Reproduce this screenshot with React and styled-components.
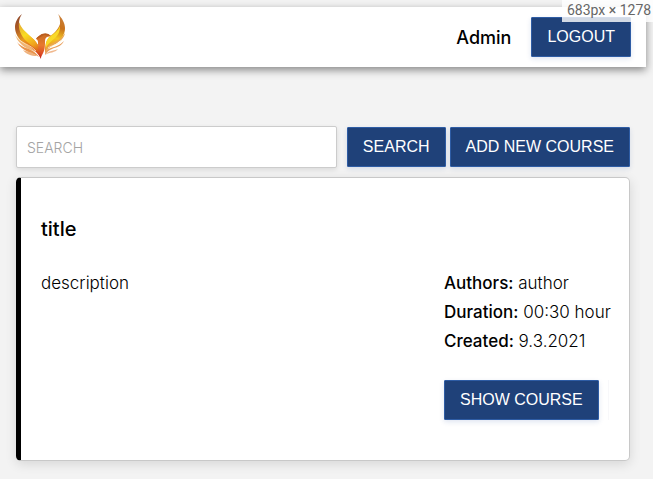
import React from "react";
import styled, { createGlobalStyle } from "styled-components";

const GlobalStyle = createGlobalStyle`
  * { box-sizing: border-box; }
  body {
    margin: 0;
    background: #f3f3f3;
    color: #000;
    font-family: Inter, "Open Sans", sans-serif;
    font-size: 17px;
    font-weight: 300;
  }
`;

const Page = styled.div`
  position: relative;
  overflow: hidden;
  padding: 7px 7px 18px 0;
`;

const Header = styled.header`
  display: flex;
  align-items: center;
  justify-content: space-between;
  height: 60px;
  padding: 0 15px 0 14px;
  background: #fff;
  box-shadow: 0 3px 8px rgba(0, 0, 0, 0.45);
`;

const LogoSvg = styled.svg`
  display: block;
  width: 52px;
  height: 48px;
`;

const UserArea = styled.div`
  display: flex;
  align-items: center;
  gap: 20px;
`;

const UserName = styled.span`
  font-size: 18px;
  font-weight: 500;
`;

const Button = styled.button`
  height: 40px;
  padding: 0 15px;
  border: 1px solid #2e5ca4;
  border-radius: 1px;
  background: #1f4179;
  color: #fff;
  font-family: "Liberation Sans", Arial, sans-serif;
  font-size: 16px;
  white-space: nowrap;
  text-transform: uppercase;
  box-shadow: 0 2px 5px rgba(40, 80, 160, 0.15);
  cursor: pointer;
`;

const SizeBadge = styled.div`
  position: absolute;
  top: 0;
  right: 0;
  width: 91px;
  height: 22px;
  padding-left: 5px;
  overflow: hidden;
  background: rgba(255, 255, 255, 0.8);
  color: #666;
  font-family: Roboto, sans-serif;
  font-size: 14px;
  font-weight: 400;
  line-height: 21px;
  white-space: nowrap;
`;

const Main = styled.main`
  display: flex;
  flex-direction: column;
  gap: 9px;
  padding: 59px 16px 0;
`;

const SearchBar = styled.form`
  display: flex;
  align-items: center;
  gap: 4px;
`;

const SearchInput = styled.input`
  flex: 1;
  min-width: 0;
  height: 42px;
  margin-right: 6px;
  padding: 0 10px;
  border: 1px solid #ccc;
  border-radius: 2px;
  background: #fff;
  font-family: inherit;
  font-size: 14px;
  font-weight: 300;
  box-shadow: 0 2px 5px rgba(0, 0, 0, 0.1);
  &::placeholder { color: #a4a4a4; opacity: 1; }
`;

const Card = styled.article`
  padding: 38px 20px 40px;
  border: 1px solid #c8c8c8;
  border-left: 5px solid #000;
  border-radius: 5px;
  background: #fff;
  box-shadow: 0 3px 12px rgba(0, 0, 0, 0.12);
`;

const Title = styled.h2`
  margin: 0 0 27px;
  font-size: 20px;
  font-weight: 500;
  line-height: 26px;
`;

const CardBody = styled.div`
  display: flex;
  justify-content: space-between;
  gap: 20px;
`;

const Description = styled.p`
  margin: 0;
  line-height: 29px;
`;

const Details = styled.div`
  flex: 0 0 165px;
  min-width: 0;
`;

const Detail = styled.p`
  margin: 0;
  line-height: 29px;
  white-space: nowrap;
  b { font-weight: 500; }
`;

const Actions = styled.div`
  display: flex;
  justify-content: space-between;
  margin-top: 24px;
  border-right: 1px solid #f8f8fa;
`;

function Logo() {
  return (
    <LogoSvg viewBox="0 0 52 48" role="img" aria-label="Phoenix">
      <defs>
        <linearGradient id="leftWing" gradientUnits="userSpaceOnUse" x1="3" y1="2" x2="27" y2="45">
          <stop offset="0" stopColor="#8f4a2c" />
          <stop offset=".25" stopColor="#ad5a24" />
          <stop offset=".5" stopColor="#e89a22" />
          <stop offset=".8" stopColor="#df5b1c" />
          <stop offset="1" stopColor="#c4211a" />
        </linearGradient>
        <linearGradient id="leftInner" gradientUnits="userSpaceOnUse" x1="6" y1="8" x2="27" y2="44">
          <stop offset="0" stopColor="#e3a43a" />
          <stop offset=".35" stopColor="#f9dc22" />
          <stop offset=".65" stopColor="#f0a31c" />
          <stop offset="1" stopColor="#cc2a1a" />
        </linearGradient>
        <linearGradient id="rightWing" gradientUnits="userSpaceOnUse" x1="46" y1="1" x2="31" y2="42">
          <stop offset="0" stopColor="#c9813e" />
          <stop offset=".3" stopColor="#c9721c" />
          <stop offset=".55" stopColor="#f4c81f" />
          <stop offset="1" stopColor="#e57b2a" />
        </linearGradient>
        <linearGradient id="body" x1="0" y1="0" x2="0" y2="1">
          <stop offset="0" stopColor="#c56a22" />
          <stop offset=".5" stopColor="#e8792f" />
          <stop offset="1" stopColor="#d83a22" />
        </linearGradient>
      </defs>
      <path fill="url(#leftWing)" d="M8 1C4 4 1 9 1 14c0 6 3 11 7 15 6 5 14 7 19 17 1-8-2-13-6-18C16 22 7 18 5 10c0-3 1-6 3-9Z" />
      <path fill="url(#leftInner)" d="M5 9c2 6 6 9 11 14 6 5 11 10 11 22C23 35 16 32 11 27 7 22 4 16 5 9Z" />
      <path fill="#f0b574" d="M1 21c2 5 7 7 12 11 4 2 6 4 9 7-6-3-10-3-15-8-3-3-5-6-6-10Z" />
      <path fill="#e8924a" d="M3 29c4 5 10 6 14 8 4 2 6 4 8 7-7-5-17-5-22-15Z" />
      <path fill="#efb27d" d="M9 37c5 2 10 2 14 6-6 0-11-2-14-6Z" />
      <path fill="url(#rightWing)" d="M44 1c4 4 7 9 7 14 0 6-3 10-7 14-5 4-10 5-13 11 0-6 0-11 4-16 4-3 9-7 11-13 0-4 0-7-2-10Z" />
      <path fill="#f8d92b" d="M46 13c0 4-1 8-4 11-4 4-8 6-10 11 0-5 0-8 4-11s8-6 10-11Z" />
      <path fill="#eba64d" d="M51 20c-1 6-5 8-10 11-5 2-8 5-10 9 0-4 2-7 6-9 6-3 10-5 14-11Z" />
      <path fill="#e9a05c" d="M50 28c-3 6-8 6-12 8-3 1-5 3-7 6 0-4 2-6 6-7 6-2 9-3 13-7Z" />
      <path fill="#f0b78c" d="M44 36c-3 4-8 3-13 6 2-4 8-4 13-6Z" />
      <path fill="none" stroke="#fff2d8" strokeWidth=".7" d="M2 23c5 8 14 8 20 15M48 27c-4 5-10 5-14 8" />
      <path fill="url(#body)" d="M22 26c1-2 4-4 6-5 3-1 6-1 9 2l-4 1c-2 1-2 3-2 6 0 6-1 9-4 14-1-6-3-8-3-13 0-3 0-4-2-5Z" />
      <path fill="#b95c20" d="M22 26c1-2 4-4 6-5 3-1 6-1 9 2l-7-1-5 3-3 1Z" />
    </LogoSvg>
  );
}

export default function App() {
  return (
    <>
      <GlobalStyle />
      <Page>
        <Header>
          <Logo />
          <UserArea>
            <UserName>Admin</UserName>
            <Button type="button">Logout</Button>
          </UserArea>
        </Header>
        <Main>
          <SearchBar onSubmit={(event) => event.preventDefault()}>
            <SearchInput type="search" placeholder="SEARCH" aria-label="Search" />
            <Button type="submit">Search</Button>
            <Button type="button">Add new course</Button>
          </SearchBar>
          <Card>
            <Title>title</Title>
            <CardBody>
              <Description>description</Description>
              <Details>
                <Detail><b>Authors:</b> author</Detail>
                <Detail><b>Duration:</b> 00:30 hour</Detail>
                <Detail><b>Created:</b> 9.3.2021</Detail>
                <Actions>
                  <Button type="button">Show course</Button>
                </Actions>
              </Details>
            </CardBody>
          </Card>
        </Main>
        <SizeBadge>683px × 1278</SizeBadge>
      </Page>
    </>
  );
}
